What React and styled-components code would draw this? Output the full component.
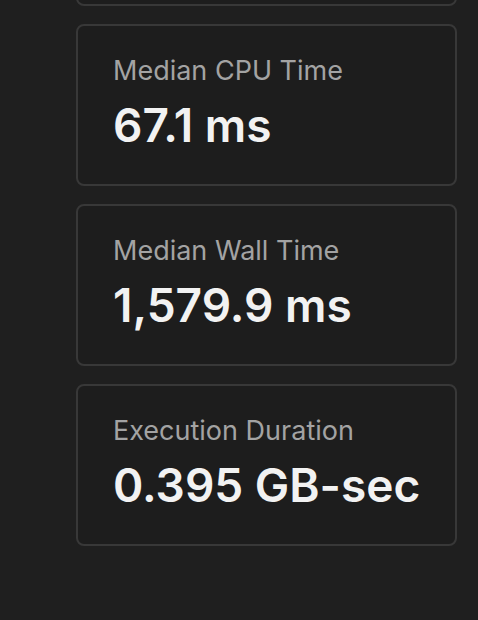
import React from "react";
import styled, { createGlobalStyle } from "styled-components";

const Global = createGlobalStyle`
  html, body { margin: 0; padding: 0; background: #1f1f1f; }
  body { font-family: Inter, "Noto Sans", "Liberation Sans", sans-serif; overflow: hidden; }
`;

const Page = styled.div`
  width: 478px;
  height: 620px;
  overflow: hidden;
  background: #1f1f1f;
  box-sizing: border-box;
  padding: 0 21px 0 76px;
`;

const List = styled.div`
  display: flex;
  flex-direction: column;
  gap: 18px;
  margin-top: -156px;
`;

const Card = styled.div`
  box-sizing: border-box;
  height: 162px;
  border: 2px solid #383838;
  border-radius: 8px;
  background: #1d1d1d;
  padding: 29px 20px 0 35px;
  display: flex;
  flex-direction: column;
  gap: 11px;
`;

const Label = styled.div`
  font-size: 27px;
  line-height: 1.2;
  color: #a3a3a3;
  font-weight: 400;
  white-space: nowrap;
`;

const Value = styled.div`
  font-size: 46px;
  line-height: 1.2;
  color: #f2f2f2;
  font-weight: 600;
  white-space: nowrap;
`;

const stats = [
  { label: "Median CPU Time", value: "67.1 ms" },
  { label: "Median Wall Time", value: "1,579.9 ms" },
  { label: "Execution Duration", value: "0.395 GB-sec" },
];

export default function App() {
  return (
    <>
      <Global />
      <Page>
        <List>
          <Card aria-hidden="true" />
          {stats.map((s) => (
            <Card key={s.label}>
              <Label>{s.label}</Label>
              <Value>{s.value}</Value>
            </Card>
          ))}
        </List>
      </Page>
    </>
  );
}
